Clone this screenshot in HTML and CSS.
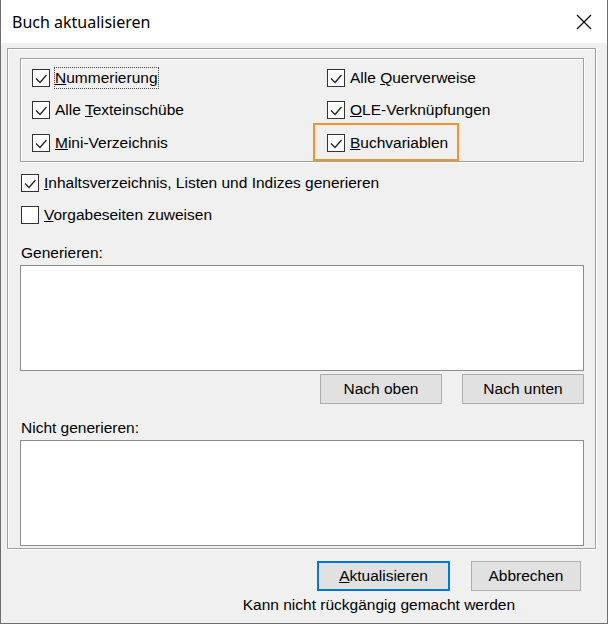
FILE: index.html
```html
<!DOCTYPE html>
<html lang="de">
<head>
<meta charset="utf-8">
<title>Buch aktualisieren</title>
<link rel="stylesheet" href="styles.css">
</head>
<body>
<div class="window">
  <div class="titlebar">
    <span class="title">Buch aktualisieren</span>
    <svg class="close" viewBox="0 0 16 16" width="16" height="16"><path d="M1 1 L15 15 M15 1 L1 15" stroke="#000" stroke-width="1.1" fill="none"/></svg>
  </div>
  <div class="main">
    <div class="frame">
      <div class="group">
        <div class="cb"><span class="box"><svg viewBox="0 0 16 16"><path d="M3 8.5 L7 12.5 L13.5 5" /></svg></span><span class="lbl focus"><u>N</u>ummerierung</span></div>
        <div class="cb"><span class="box"><svg viewBox="0 0 16 16"><path d="M3 8.5 L7 12.5 L13.5 5" /></svg></span><span class="lbl">Alle <u>Q</u>uerverweise</span></div>
        <div class="cb"><span class="box"><svg viewBox="0 0 16 16"><path d="M3 8.5 L7 12.5 L13.5 5" /></svg></span><span class="lbl">Alle <u>T</u>exteinschübe</span></div>
        <div class="cb"><span class="box"><svg viewBox="0 0 16 16"><path d="M3 8.5 L7 12.5 L13.5 5" /></svg></span><span class="lbl"><u>O</u>LE-Verknüpfungen</span></div>
        <div class="cb"><span class="box"><svg viewBox="0 0 16 16"><path d="M3 8.5 L7 12.5 L13.5 5" /></svg></span><span class="lbl"><u>M</u>ini-Verzeichnis</span></div>
        <div class="cb hl"><span class="box"><svg viewBox="0 0 16 16"><path d="M3 8.5 L7 12.5 L13.5 5" /></svg></span><span class="lbl"><u>B</u>uchvariablen</span></div>
      </div>
      <div class="opts">
        <div class="cb"><span class="box"><svg viewBox="0 0 16 16"><path d="M3 8.5 L7 12.5 L13.5 5" /></svg></span><span class="lbl"><u>I</u>nhaltsverzeichnis, Listen und Indizes generieren</span></div>
        <div class="cb"><span class="box"></span><span class="lbl"><u>V</u>orgabeseiten zuweisen</span></div>
      </div>
      <div class="caption">Generieren:</div>
      <div class="listbox"></div>
      <div class="btnrow">
        <button class="btn">Nach oben</button>
        <button class="btn">Nach unten</button>
      </div>
      <div class="caption cap2">Nicht generieren:</div>
      <div class="listbox"></div>
    </div>
  </div>
  <div class="footer">
    <div class="btns">
      <button class="btn btn-default"><u>A</u>ktualisieren</button>
      <button class="btn btn-cancel">Abbrechen</button>
    </div>
    <div class="note">Kann nicht rückgängig gemacht werden</div>
  </div>
</div>
</body>
</html>
```
FILE: styles.css
```css
html, body {
  margin: 0;
  background: #ffffff;
}
body {
  font-family: "Liberation Sans", Arial, sans-serif;
  font-size: 15.5px;
  color: #000;
}
.window {
  width: 608px;
  height: 624px;
  box-sizing: border-box;
  border: 1px solid #6e6e6e;
  border-top: 0;
  background: #f0f0f0;
  display: flex;
  flex-direction: column;
}
.titlebar {
  height: 43px;
  flex: none;
  background: #ffffff;
  display: flex;
  align-items: center;
  justify-content: space-between;
  padding: 0 15px 0 11px;
}
.title {
  font-family: "Noto Sans", "Open Sans", sans-serif;
  font-size: 16px;
  color: #000;
}
.close {
  display: block;
}
.main {
  padding: 5px 11px 0 6px;
}
.frame {
  border: 1px solid #a0a0a0;
  box-shadow: inset 1px 1px 0 #fff, 1px 1px 0 #fff;
  padding: 9px 11px 2px 12px;
}
.group {
  border: 1px solid #a0a0a0;
  box-shadow: inset 1px 1px 0 #fff, 1px 1px 0 #fff;
  padding: 3px 0 1px 11px;
  display: grid;
  grid-template-columns: 295px 1fr;
  grid-template-rows: 32px 32px 34px;
}
.cb {
  display: flex;
  align-items: center;
  position: relative;
}
.box {
  width: 18px;
  height: 18px;
  box-sizing: border-box;
  border: 1px solid #333;
  background: #fff;
  flex: none;
  display: block;
}
.box svg {
  display: block;
  width: 16px;
  height: 16px;
}
.box path {
  fill: none;
  stroke: #222;
  stroke-width: 1.3;
}
.lbl {
  margin-left: 4px;
  border: 1px solid transparent;
  line-height: 20px;
  white-space: nowrap;
}
.lbl.focus {
  border: 1px dotted #444;
}
.hl::after {
  content: "";
  position: absolute;
  left: -14px;
  top: -3px;
  width: 146px;
  height: 38px;
  box-sizing: border-box;
  border: 2px solid #f0952c;
}
.opts {
  margin-top: 5px;
  padding-left: 1px;
}
.opts .cb {
  height: 32px;
}
.caption {
  line-height: 18px;
  margin: 13px 0 3px 1px;
}
.cap2 {
  margin-top: 15px;
}
.listbox {
  height: 106px;
  box-sizing: border-box;
  border: 1px solid #8c8c8c;
  background: #fff;
}
.btnrow {
  display: flex;
  justify-content: flex-end;
  gap: 20px;
  margin-top: 3px;
}
.btn {
  width: 122px;
  height: 30px;
  box-sizing: border-box;
  border: 1px solid #adadad;
  background: #e1e1e1;
  font-family: "Liberation Sans", Arial, sans-serif;
  font-size: 15.5px;
  color: #000;
  padding: 0;
  margin: 0;
}
.footer {
  display: flex;
  flex-direction: column;
  align-items: flex-end;
  padding: 12px 26px 0 0;
}
.btns {
  display: flex;
  gap: 21px;
}
.btn-default {
  width: 133px;
  border: 2px solid #0078d7;
}
.btn-cancel {
  width: 110px;
}
.note {
  margin-top: 5px;
  margin-right: 66px;
  line-height: 18px;
}
```
